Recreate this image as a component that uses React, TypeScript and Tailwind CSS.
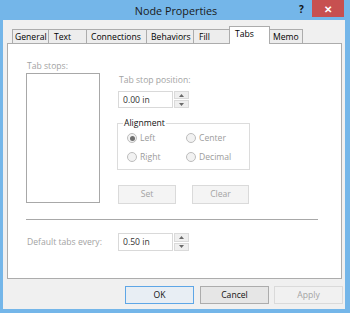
import React from "react";

const font = { fontFamily: '"Open Sans", "Noto Sans", sans-serif' };

function Tab({ label, w, ml, pl, active }: { label: string; w: number; ml: number; pl: number; active?: boolean }) {
  return (
    <div
      className={
        active
          ? "relative z-10 h-[18px] -mb-px bg-white border-l border-t border-r border-[#acacac] flex items-start pt-[1px] text-[#000]"
          : "h-[14px] bg-[#ededed] border-l border-t border-r border-[#acacac] flex items-center text-[#000]"
      }
      style={{ width: w, marginLeft: ml, paddingLeft: pl }}
    >
      <span className="leading-[12px]">{label}</span>
    </div>
  );
}

function Spin({ value, h }: { value: string; h: number }) {
  return (
    <div className="flex" style={{ height: h }}>
      <div className="w-[55px] h-full bg-white border border-[#d9d9d9] flex items-center pl-[4px] text-[#333]">
        <span className="leading-[12px]">{value}</span>
      </div>
      <div className="ml-[1px] w-[15px] h-full flex flex-col gap-[1px]">
        <div className="flex-1 bg-[#efefef] border border-[#dadada] flex items-center justify-center">
          <svg width="5" height="3" viewBox="0 0 5 3"><path d="M0 3 L2.5 0 L5 3 Z" fill="#6a6a6a" /></svg>
        </div>
        <div className="flex-1 bg-[#efefef] border border-[#dadada] flex items-center justify-center">
          <svg width="5" height="3" viewBox="0 0 5 3"><path d="M0 0 L2.5 3 L5 0 Z" fill="#6a6a6a" /></svg>
        </div>
      </div>
    </div>
  );
}

function Radio({ label, checked }: { label: string; checked?: boolean }) {
  return (
    <div className="flex items-center h-[12px]">
      <div className="w-[10px] h-[10px] rounded-full border border-[#bdbdbd] bg-[#f2f2f2] flex items-center justify-center">
        {checked && <div className="w-[5px] h-[5px] rounded-full bg-[#6f6f6f]" />}
      </div>
      <span className="ml-[3px] leading-[12px] text-[#9c9c9c]">{label}</span>
    </div>
  );
}

export default function App() {
  return (
    <div className="w-[350px] h-[313px] bg-[#74b6e9] flex flex-col pl-[3px] pr-[5px] pb-[4px] text-[8.6px]" style={font}>
      {/* Title bar */}
      <div className="relative h-[20px] flex items-center justify-center">
        <span className="text-[10.8px] text-[#1a1a1a] leading-[14px] mt-[1px] ml-[4px]">Node Properties</span>
        <span className="absolute left-[296px] top-[2px] text-[10px] font-bold text-[#111] leading-[14px]">?</span>
        <div className="absolute right-[1px] top-0 w-[32px] h-[17px] bg-[#c75050] flex items-center justify-center">
          <span className="text-white text-[10px] font-bold leading-[12px]">✕</span>
        </div>
      </div>

      {/* Client */}
      <div className="flex-1 bg-[#f0f0f0] flex flex-col">
        {/* Tab strip */}
        <div className="mt-[6px] ml-[9px] h-[17px] flex items-end">
          <Tab label="General" w={37} ml={0} pl={2} />
          <Tab label="Text" w={39} ml={-1} pl={5} />
          <Tab label="Connections" w={61} ml={-1} pl={4} />
          <Tab label="Behaviors" w={48} ml={-1} pl={4} />
          <Tab label="Fill" w={38} ml={-1} pl={5} />
          <Tab label="Tabs" w={41} ml={-2} pl={5} active />
          <Tab label="Memo" w={34} ml={-1} pl={3} />
        </div>

        {/* Panel */}
        <div className="ml-[4px] w-[335px] h-[236px] bg-white border border-[#acacac] flex flex-col pl-[18px]">
          <div className="flex">
            {/* Left column */}
            <div className="flex flex-col pt-[16px]">
              <span className="leading-[12px] text-[#a3a3a3] pl-[1px]">Tab stops:</span>
              <div className="mt-[1px] w-[74px] h-[130px] border border-[#a8a8a8] bg-white" />
            </div>
            {/* Right column */}
            <div className="ml-[17px] flex flex-col pt-[30px]">
              <span className="leading-[12px] text-[#a3a3a3] pl-[2px]">Tab stop position:</span>
              <div className="mt-[5px] ml-[1px]">
                <Spin value="0.00 in" h={17} />
              </div>
              <div className="relative mt-[15px] w-[133px] h-[47px] border border-[#dcdcdc] flex flex-col pl-[9px] pt-[8px] gap-[7px]">
                <span className="absolute left-[5px] -top-[7px] bg-white px-[1px] leading-[12px] text-[#111]">Alignment</span>
                <div className="flex">
                  <div className="w-[59px]"><Radio label="Left" checked /></div>
                  <Radio label="Center" />
                </div>
                <div className="flex">
                  <div className="w-[59px]"><Radio label="Right" /></div>
                  <Radio label="Decimal" />
                </div>
              </div>
              <div className="mt-[15px] ml-[1px] flex gap-[16px]">
                <div className="w-[58px] h-[19px] bg-[#f4f4f4] border border-[#dadada] flex items-center justify-center text-[#a3a3a3]">Set</div>
                <div className="w-[57px] h-[19px] bg-[#f4f4f4] border border-[#dadada] flex items-center justify-center text-[#a3a3a3]">Clear</div>
              </div>
            </div>
          </div>
          <div className="mt-[15px] w-[292px] h-px bg-[#a8a8a8]" />
          <div className="mt-[13px] flex items-center">
            <span className="w-[92px] pl-[1px] leading-[12px] text-[#a3a3a3]">Default tabs every:</span>
            <Spin value="0.50 in" h={18} />
          </div>
        </div>

        {/* Buttons */}
        <div className="mt-[7px] flex justify-end pr-[2px]">
          <div className="w-[69px] h-[18px] border border-[#5ea6e6] bg-[#e8eef4] flex items-center justify-center text-[#111]">OK</div>
          <div className="ml-[6px] w-[69px] h-[18px] border border-[#acacac] bg-[#e6e6e6] flex items-center justify-center text-[#111]">Cancel</div>
          <div className="ml-[5px] w-[69px] h-[18px] border border-[#dadada] bg-[#f1f1f1] flex items-center justify-center text-[#a3a3a3]">Apply</div>
        </div>
      </div>
    </div>
  );
}
